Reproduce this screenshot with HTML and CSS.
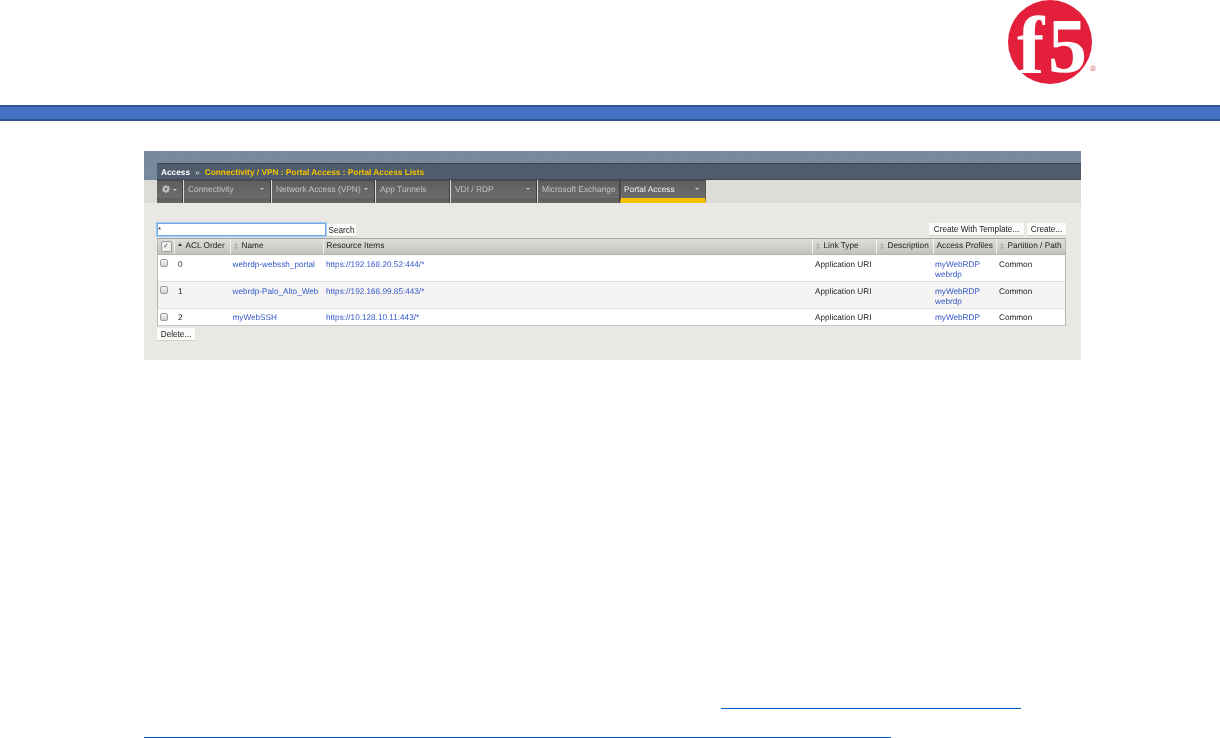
FILE: index.html
```html
<!DOCTYPE html>
<html lang="en">
<head>
<meta charset="utf-8">
<title>Portal Access Lists</title>
<link rel="stylesheet" href="styles.css">
</head>
<body>
<header class="brand">
  <svg class="logo" width="100" height="100" viewBox="0 0 100 100">
    <circle cx="42" cy="42" r="42" fill="#e31f3c"/>
    <text class="logo-f" x="9" y="73">f</text>
    <text class="logo-5" x="40" y="72">5</text>
    <text class="logo-r" x="82" y="71">®</text>
  </svg>
</header>
<div class="bar"></div>
<main class="panel">
  <div class="crumb-row">
    <div class="crumb"><b class="crumb-root">Access</b><span class="crumb-sep">»</span><b class="crumb-path">Connectivity / VPN : Portal Access : Portal Access Lists</b></div>
  </div>
  <div class="tabs-row">
    <nav class="tabs">
      <div class="tab tab-gear">
        <svg width="8" height="8" viewBox="0 0 12 12"><path fill="#bdbdbd" d="M5 0h2l.3 1.600 1.200.5L9.900 1.200l1.400 1.400-.9 1.400.5 1.200L12 5v2l-1.600.3-.5 1.200.9 1.400-1.400 1.400-1.400-.9-1.200.5L7 12H5l-.3-1.600-1.200-.5-1.400.9L.7 9.400l.9-1.400-.5-1.200L0 7V5l1.600-.3.5-1.200-.9-1.400L2.600 .7l1.400.9 1.200-.5z"/><circle cx="6" cy="6" r="1.800" fill="#666"/></svg>
        <i class="caret"></i>
      </div>
      <div class="tab w-conn"><span>Connectivity</span><i class="caret"></i></div>
      <div class="tab w-net"><span>Network Access (VPN)</span><i class="caret"></i></div>
      <div class="tab w-app"><span>App Tunnels</span></div>
      <div class="tab w-vdi"><span>VDI / RDP</span><i class="caret"></i></div>
      <div class="tab w-ms"><span>Microsoft Exchange</span></div>
      <div class="tab tab-active w-portal"><span>Portal Access</span><i class="caret"></i></div>
    </nav>
  </div>
  <section class="content">
    <div class="toolbar">
      <input class="search" type="text" value="*">
      <button class="btn btn-search">Search</button>
      <div class="toolbar-right">
        <button class="btn btn-template">Create With Template...</button>
        <button class="btn btn-create">Create...</button>
      </div>
    </div>
    <div class="table">
      <div class="row head">
        <div class="cell c-check"><span class="check checked">✓</span></div>
        <div class="cell c-order"><i class="sort up"></i>ACL Order</div>
        <div class="cell c-name"><i class="sort"></i>Name</div>
        <div class="cell c-res">Resource Items</div>
        <div class="cell c-link"><i class="sort"></i>Link Type</div>
        <div class="cell c-desc"><i class="sort"></i>Description</div>
        <div class="cell c-prof">Access Profiles</div>
        <div class="cell c-part"><i class="sort"></i>Partition / Path</div>
      </div>
      <div class="row tall">
        <div class="cell c-check"><span class="check"></span></div>
        <div class="cell c-order">0</div>
        <div class="cell c-name"><a>webrdp-webssh_portal</a></div>
        <div class="cell c-res"><a>https://192.168.20.52:444/*</a></div>
        <div class="cell c-link">Application URI</div>
        <div class="cell c-desc"></div>
        <div class="cell c-prof"><a>myWebRDP</a><a>webrdp</a></div>
        <div class="cell c-part">Common</div>
      </div>
      <div class="row tall alt">
        <div class="cell c-check"><span class="check"></span></div>
        <div class="cell c-order">1</div>
        <div class="cell c-name"><a>webrdp-Palo_Alto_Web</a></div>
        <div class="cell c-res"><a>https://192.168.99.85:443/*</a></div>
        <div class="cell c-link">Application URI</div>
        <div class="cell c-desc"></div>
        <div class="cell c-prof"><a>myWebRDP</a><a>webrdp</a></div>
        <div class="cell c-part">Common</div>
      </div>
      <div class="row short">
        <div class="cell c-check"><span class="check"></span></div>
        <div class="cell c-order">2</div>
        <div class="cell c-name"><a>myWebSSH</a></div>
        <div class="cell c-res"><a>https://10.128.10.11:443/*</a></div>
        <div class="cell c-link">Application URI</div>
        <div class="cell c-desc"></div>
        <div class="cell c-prof"><a>myWebRDP</a></div>
        <div class="cell c-part">Common</div>
      </div>
    </div>
    <button class="btn btn-delete">Delete...</button>
  </section>
</main>
<footer class="foot">
  <div class="rule rule-one"></div>
  <div class="rule rule-two"></div>
</footer>
</body>
</html>
```
FILE: styles.css
```css
* { box-sizing: border-box; }
html, body { margin: 0; padding: 0; background: #fff; }
body {
  width: 1220px;
  height: 738px;
  overflow: hidden;
  font-family: "Liberation Sans", Arial, sans-serif;
  font-size: 8.2px;
  color: #222;
  text-rendering: geometricPrecision;
}
.brand { height: 105px; padding-left: 1008px; }
.logo { display: block; }
.logo-f, .logo-5 { font-family: "Liberation Serif", serif; font-weight: 700; fill: #fff; }
.logo-f { font-size: 82px; }
.logo-5 { font-size: 78px; }
.logo-r { font-size: 8px; fill: #d9586c; font-family: "Liberation Sans", sans-serif; }
.bar {
  height: 16px;
  background: #4472c4;
  border-top: 2px solid #2f5597;
  border-bottom: 2px solid #2f5597;
}
.panel {
  margin: 30px 0 0 144px;
  width: 937px;
  height: 209px;
  background: #e9e8e4;
  display: flex;
  flex-direction: column;
  filter: blur(.45px);
}
.crumb-row {
  height: 29px;
  padding: 12px 0 0 13px;
  background: repeating-linear-gradient(135deg, #748499 0 1px, #7a8a9f 1px 3px);
}
.crumb {
  height: 17px;
  background: #4e5c6b;
  border-top: 1px solid #3a4550;
  border-bottom: 1px solid #3d4853;
  display: flex;
  align-items: center;
  padding-left: 4px;
  font-size: 8.3px;
}
.crumb-root { color: #fff; }
.crumb-sep { color: #ddd; margin: 0 5px; }
.crumb-path { color: #f7c200; }
.tabs-row { height: 23px; padding-left: 13px; background: #dddcd7; }
.tabs { display: flex; height: 23px; column-gap: 1px; }
.tab {
  position: relative;
  display: flex;
  align-items: flex-start;
  padding: 3px 0 0 4px;
  font-size: 8.4px;
  color: #c3c3c3;
  background: linear-gradient(#5e5e5e 0, #6e6d6c 17px, #5f5e5d 17px, #676665 100%);
  border-right: 1px solid #3e3e3e;
  border-top: 1px solid #4c4c4c;
}
.tab-gear { width: 26px; padding: 4px 0 0 5px; column-gap: 3px; }
.w-conn { width: 87px; }
.w-net { width: 103px; }
.w-app { width: 74px; }
.w-vdi { width: 86px; }
.w-ms { width: 82px; margin-right: -1px; }
.w-portal { width: 86px; }
.tab-active {
  padding-left: 3px;
  color: #f1f1f1;
  background: linear-gradient(#5e5e5e, #6e6d6c 17px);
  border-bottom: 5px solid #f5bf00;
  border-right: 1px solid #55534a;
  border-left: 1px solid #55534a;
}
.caret {
  display: block;
  width: 0;
  height: 0;
  border-left: 2.5px solid transparent;
  border-right: 2.5px solid transparent;
  border-top: 2.5px solid #c8c8c8;
}
.tab > .caret { position: absolute; right: 6px; top: 7px; }
.tab-gear > .caret { position: static; margin-top: 4px; }
.content { flex: 1; padding: 20px 15px 0 13px; }
.toolbar { display: flex; height: 15px; align-items: flex-start; }
.toolbar-right { margin-left: auto; display: flex; column-gap: 3px; }
.search {
  width: 169px;
  height: 13px;
  margin: 0;
  padding: 0;
  font: 8px "Liberation Sans", sans-serif;
  color: #111;
  background: #fff;
  border: 1px solid #6fa8e0;
  box-shadow: 0 0 1px 1px #a9cdf0;
  outline: none;
}
.btn {
  height: 12px;
  padding: 0;
  margin: 0;
  font: 8.2px "Liberation Sans", sans-serif;
  color: #222;
  background: #fbfbfa;
  border: 0;
  box-shadow: 0 1px 0 #cfcec9;
}
.btn-search { width: 29px; margin-left: 1px; margin-top: 1px; }
.btn-template { width: 95px; }
.btn-create { width: 39px; }
.table {
  width: 909px;
  border: 1px solid #b9b8b3;
  border-top: 1px solid #a5a4a0;
  border-bottom: 1px solid #c6c5c1;
  background: #fff;
}
.row { display: grid; grid-template-columns: 17px 56px 93px 489px 64px 57px 63px 1fr; }
.head {
  height: 16px;
  background: linear-gradient(#dfded9, #c3c2bd);
  border-bottom: 1px solid #b2b1ac;
}
.head .cell {
  display: flex;
  align-items: center;
  column-gap: 3px;
  padding: 0 0 1px 2.5px;
  font-size: 8.25px;
  border-right: 1px solid #f1f0ec;
  color: #222;
}
.head .cell:last-child { border-right: 0; }
.tall { height: 27px; border-bottom: 1px solid #dfdedb; }
.short { height: 16px; }
.alt { background: #f5f4f2; }
.cell { padding: 5px 0 0 2px; line-height: 10px; }
.short .cell { padding-top: 4px; }
.c-check { padding: 4px 0 0 2px; }
.row:not(.head) .c-order { padding-left: 3px; }
.row:not(.head) .c-prof { padding-left: 1px; }
.row:not(.head) .c-name { padding-left: 1.5px; }
a { display: block; color: #3358c8; }
.check {
  display: block;
  width: 8px;
  height: 8px;
  background: linear-gradient(#f4f4f4, #cfcfcf);
  border: 1px solid #9c9c9c;
  border-radius: 2px;
  font-size: 7px;
  line-height: 6px;
  text-align: center;
  color: #555;
}
.head .check { width: 11px; height: 11px; line-height: 9px; background: #f0f0f0; }
.sort {
  position: relative;
  display: block;
  width: 5px;
  height: 7px;
  flex: none;
}
.sort::before, .sort::after {
  content: "";
  position: absolute;
  left: 0;
  width: 0;
  height: 0;
  border-left: 2.5px solid transparent;
  border-right: 2.5px solid transparent;
}
.sort::before { top: 0; border-bottom: 3px solid #aeada8; }
.sort::after { bottom: 0; border-top: 3px solid #aeada8; }
.sort.up::before { border-bottom-color: #333; }
.sort.up::after { display: none; }
.btn-delete { display: block; width: 38px; margin-top: 2px; }
.foot { position: relative; }
.rule { position: absolute; height: 1px; background: #0563c1; }
.rule-one { left: 721px; top: 348px; width: 300px; }
.rule-two { left: 144px; top: 377px; width: 747px; }
```
